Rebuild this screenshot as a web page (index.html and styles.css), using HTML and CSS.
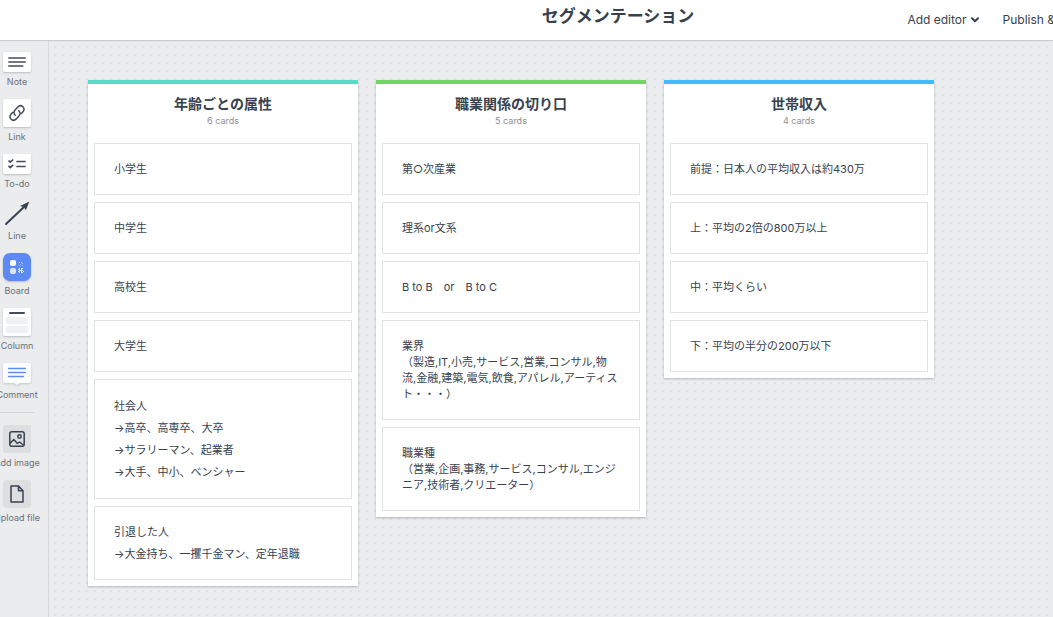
FILE: index.html
```html
<!DOCTYPE html>
<html lang="ja">
<head>
<meta charset="utf-8">
<title>セグメンテーション</title>
<link rel="stylesheet" href="styles.css">
</head>
<body>
<header class="topbar">
  <h1 class="topbar-title">セグメンテーション</h1>
  <nav class="topbar-actions">
    <button class="action" type="button">Add editor
      <svg width="8" height="6" viewBox="0 0 8 6" fill="none" stroke="currentColor" stroke-width="2" stroke-linecap="round" stroke-linejoin="round"><path d="M1 1.2l3 3 3-3"/></svg>
    </button>
    <button class="action" type="button">Publish &amp;</button>
  </nav>
</header>
<div class="workspace">
  <aside class="tools">
    <button class="tool" type="button">
      <span class="tile tile-low"><svg width="18" height="10" viewBox="0 0 18 10" fill="none" stroke="#434c5a" stroke-width="1.5" stroke-linecap="round"><path d="M.8 1h16.4M.8 5h16.4M.8 9h14"/></svg></span>
      <span>Note</span>
    </button>
    <button class="tool" type="button">
      <span class="tile"><svg width="18" height="18" viewBox="0 0 18 18" fill="none" stroke="#434c5a" stroke-width="1.5" stroke-linecap="round"><path d="M7.2 11.2c-1.8-1.600-1.500-3.800-.2-5.100l2.800-3c1.600-1.600 3.700-1.700 5.100-.4 1.500 1.400 1.500 3.500.1 5l-1.600 1.700M10.800 6.800c1.800 1.600 1.500 3.800.2 5.100l-2.800 3c-1.600 1.600-3.700 1.700-5.100.4-1.500-1.400-1.500-3.500-.1-5l1.600-1.700"/></svg></span>
      <span>Link</span>
    </button>
    <button class="tool" type="button">
      <span class="tile tile-low"><svg width="18" height="10" viewBox="0 0 18 10" fill="none" stroke="#434c5a" stroke-width="1.7" stroke-linecap="round" stroke-linejoin="round"><path d="M1 2l1.300 1.200L4.600 1M1 7.400l1.300 1.200 2.300-2.200M9 2.500h8M9 7.500h8"/></svg></span>
      <span>To-do</span>
    </button>
    <button class="tool" type="button">
      <svg width="26" height="25" viewBox="0 0 26 25"><path d="M2 23L20 6" stroke="#38424f" stroke-width="2" stroke-linecap="round"/><path d="M25.400 .6l-3.600 8.600-1.800-2.900-3.900-1.200z" fill="#38424f"/></svg>
      <span>Line</span>
    </button>
    <button class="tool" type="button">
      <span class="tile tile-board"><svg width="14" height="14" viewBox="0 0 14 14" fill="#fff"><rect width="6" height="6" rx="2"/><rect y="8" width="6" height="6" rx="2" fill="#dce2ef"/><path d="M9 2h1v1H9zM11 2h1v1h-1zM10 4h1v1h-1zM12 3h1v1h-1zM12 5h1v1h-1zM9 5h1v1H9z" fill="#a9c1fb"/><path d="M9 8h1v1H9zM11 8h2v1h-2zM8 9h2v1H8zM11 9h1v1h-1zM9 10h4v1H9zM8 11h2v1H8zM11 11h1v1h-1zM13 11h1v1h-1zM9 12h1v1H9zM11 12h2v1h-2z" fill="#dce7ff"/></svg></span>
      <span>Board</span>
    </button>
    <button class="tool" type="button">
      <span class="tile"><svg width="22" height="22" viewBox="0 0 22 22"><rect x="3" y="1" width="16" height="2" rx="1" fill="#434c5a"/><path d="M0 6h22v7H0zM0 15h22v7H0z" fill="#f0f1f2"/></svg></span>
      <span>Column</span>
    </button>
    <button class="tool" type="button">
      <svg class="comment-icon" width="28" height="22" viewBox="0 0 28 22"><path d="M2 0h24a2 2 0 0 1 2 2v16a2 2 0 0 1-2 2H17l-3 2-3-2H2a2 2 0 0 1-2-2V2a2 2 0 0 1 2-2z" fill="#fbfcfd"/><path d="M5.600 5.500h16.800M5.600 9.500h16.800M5.600 13.500h14.800" stroke="#5b8df5" stroke-width="1.4" stroke-linecap="round"/></svg>
      <span>Comment</span>
    </button>
    <hr class="tools-rule">
    <button class="tool" type="button">
      <span class="tile tile-gray"><svg width="16" height="16" viewBox="0 0 16 16" fill="none" stroke="#38424f" stroke-width="1.500" stroke-linejoin="round"><rect x=".8" y=".8" width="14.400" height="14.400" rx="2"/><circle cx="10.500" cy="5.500" r="1.700"/><path d="M1 12.500l3.800-4 3.700 4 2-1.500 4 3"/></svg></span>
      <span>Add image</span>
    </button>
    <button class="tool" type="button">
      <span class="tile tile-gray"><svg width="14" height="18" viewBox="0 0 14 18" fill="none" stroke="#38424f" stroke-width="1.500" stroke-linejoin="round"><path d="M1 1h7.500L13 5.800V17H1zM8.500 1v4.800H13"/></svg></span>
      <span>Upload file</span>
    </button>
  </aside>
  <main class="canvas">
    <section class="column column-teal">
      <h2 class="column-title">年齢ごとの属性</h2>
      <p class="column-count">6 cards</p>
      <div class="cards">
        <article class="card"><p>小学生</p></article>
        <article class="card"><p>中学生</p></article>
        <article class="card"><p>高校生</p></article>
        <article class="card"><p>大学生</p></article>
        <article class="card card-long"><p>社会人</p><p>→高卒、高専卒、大卒</p><p>→サラリーマン、起業者</p><p>→大手、中小、ベンシャー</p></article>
        <article class="card"><p>引退した人</p><p>→大金持ち、一攫千金マン、定年退職</p></article>
      </div>
    </section>
    <section class="column column-green">
      <h2 class="column-title">職業関係の切り口</h2>
      <p class="column-count">5 cards</p>
      <div class="cards">
        <article class="card"><p>第○次産業</p></article>
        <article class="card"><p>理系or文系</p></article>
        <article class="card"><p>B to B　or　B to C</p></article>
        <article class="card"><p>業界<br>（製造,IT,小売,サービス,営業,コンサル,物<br>流,金融,建築,電気,飲食,アパレル,アーティス<br>ト・・・）</p></article>
        <article class="card"><p>職業種<br>（営業,企画,事務,サービス,コンサル,エンジ<br>ニア,技術者,クリエーター）</p></article>
      </div>
    </section>
    <section class="column column-blue">
      <h2 class="column-title">世帯収入</h2>
      <p class="column-count">4 cards</p>
      <div class="cards">
        <article class="card"><p>前提：日本人の平均収入は約430万</p></article>
        <article class="card"><p>上：平均の2倍の800万以上</p></article>
        <article class="card"><p>中：平均くらい</p></article>
        <article class="card"><p>下：平均の半分の200万以下</p></article>
      </div>
    </section>
  </main>
</div>
</body>
</html>
```
FILE: styles.css
```css
* { box-sizing: border-box; }

body {
  margin: 0;
  height: 100vh;
  display: flex;
  flex-direction: column;
  overflow: hidden;
  background: #ebecee;
  color: #38424f;
  font-family: Inter, "Noto Sans CJK JP", sans-serif;
}

h1, h2, p { margin: 0; }

button {
  border: 0;
  padding: 0;
  background: none;
  color: inherit;
  font: inherit;
}

.topbar {
  display: grid;
  grid-template-columns: 1fr auto 1fr;
  min-height: 40px;
  padding-left: 183px;
  background: #fff;
  box-shadow: 0 1px 1px #c9cdd1;
  z-index: 1;
}

.topbar-title {
  grid-column: 2;
  padding-top: 4px;
  font-size: 17px;
  line-height: 24px;
  font-weight: 700;
}

.topbar-actions {
  grid-column: 3;
  display: flex;
  justify-content: flex-end;
  gap: 24px;
  margin-right: -2px;
}

.action {
  display: flex;
  align-items: center;
  gap: 4px;
  font-size: 12px;
  line-height: 16px;
  white-space: nowrap;
}

.workspace {
  flex: 1;
  display: flex;
  min-height: 0;
}

.tools {
  flex: none;
  width: 49px;
  display: flex;
  flex-direction: column;
  gap: 12px;
  padding: 12px 14px 0 0;
  border-right: 1px solid #d6d8da;
  overflow: hidden;
}

.tool {
  display: flex;
  flex-direction: column;
  align-items: center;
  gap: 5px;
  color: #6a7079;
  font-size: 9px;
  line-height: 10px;
  white-space: nowrap;
}

.tile {
  display: grid;
  place-items: center;
  width: 28px;
  height: 28px;
  border-radius: 2px;
  background: #fff;
  box-shadow: 0 1px 2px rgba(40, 50, 60, 0.25);
}

.tile-low { height: 20px; }

.tile-board {
  border-radius: 7px;
  background: #5b8af5;
}

.tile-gray {
  border-radius: 3px;
  background: #dcdee0;
  box-shadow: none;
}

.comment-icon {
  overflow: visible;
  filter: drop-shadow(0 1px 1px rgba(40, 50, 60, 0.2));
}

.tools-rule {
  width: 100%;
  height: 1px;
  margin: 0;
  border: 0;
  background: #d3d5d8;
}

.canvas {
  flex: 1;
  display: flex;
  align-items: flex-start;
  gap: 18px;
  padding: 40px 39px;
  background: conic-gradient(from 270deg at 2px 2px, #dfe0e3 90deg, transparent 0) 5px 6px / 8px 8px;
}

.column {
  flex: none;
  width: 270px;
  padding: 0 6px 6px;
  border-top: 4px solid;
  background: #fff;
  box-shadow: 0 1px 2px rgba(40, 50, 60, 0.3);
}

.column-teal { border-top-color: #56dcc8; }
.column-green { border-top-color: #72d665; }
.column-blue { border-top-color: #42bcff; }

.column-title {
  padding-top: 10px;
  font-size: 14px;
  line-height: 20px;
  text-align: center;
}

.column-count {
  color: #8d9298;
  font-size: 9px;
  line-height: 14px;
  text-align: center;
}

.cards {
  display: flex;
  flex-direction: column;
  gap: 7px;
  margin-top: 15px;
}

.card {
  display: flex;
  flex-direction: column;
  gap: 6px;
  padding: 17px 19px;
  border: 1px solid #e1e2e3;
  font-size: 11px;
  line-height: 16px;
  white-space: nowrap;
}

.card-long {
  padding-top: 18px;
  padding-bottom: 18px;
}
```
